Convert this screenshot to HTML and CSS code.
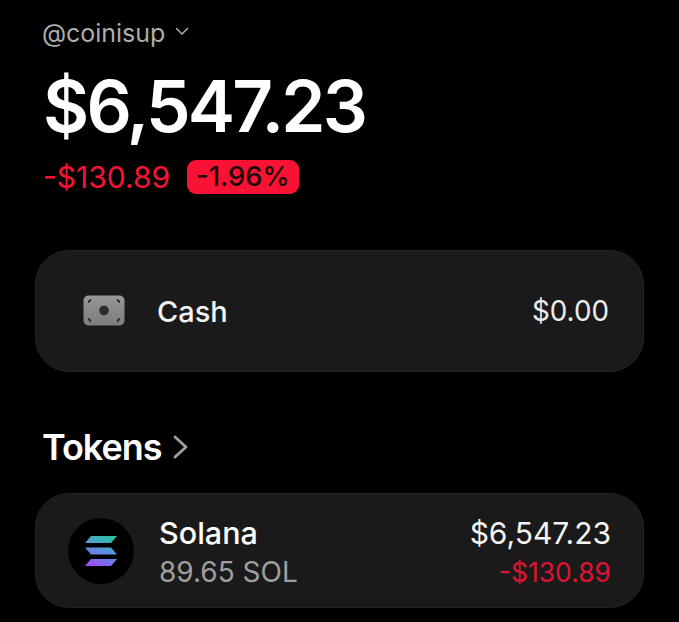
FILE: index.html
```html
<!DOCTYPE html>
<html lang="en">
<head>
<meta charset="utf-8">
<title>Wallet</title>
<link rel="stylesheet" href="styles.css">
</head>
<body>
<main class="page">
  <header class="account">
    <span class="handle">@coinisup</span>
    <svg class="caret" width="14" height="9" viewBox="0 0 14 9"><path d="M1.5 1.5 7 7l5.500-5.500" fill="none" stroke="#b0b0b0" stroke-width="1.500" stroke-linecap="round" stroke-linejoin="round"/></svg>
  </header>
  <h1 class="balance">$6,547.23</h1>
  <div class="change">
    <span class="change-value">-$130.89</span>
    <span class="change-badge">-1.96%</span>
  </div>
  <section class="card cash">
    <svg class="cash-icon" width="42" height="31" viewBox="0 0 42 31">
      <defs><linearGradient id="bill" x1="0" y1="0" x2="0" y2="1"><stop offset="0" stop-color="#98989a"/><stop offset="1" stop-color="#7c7c7e"/></linearGradient></defs>
      <rect x="0.5" y="0.5" width="41" height="30" rx="5" fill="url(#bill)"/>
      <circle cx="21" cy="15.500" r="4.800" fill="#2b2b2d"/>
      <path d="M5 6.500C5.500 5 6.500 4.300 8.500 4 8.300 6 7.300 7.500 5 8ZM37 6.500C36.500 5 35.500 4.300 33.500 4 33.700 6 34.700 7.500 37 8ZM5 24.500C5.500 26 6.500 26.700 8.500 27 8.300 25 7.300 23.500 5 23ZM37 24.500C36.500 26 35.500 26.700 33.500 27 33.700 25 34.700 23.500 37 23Z" fill="#2b2b2d"/>
    </svg>
    <span class="cash-label">Cash</span>
    <span class="cash-value">$0.00</span>
  </section>
  <h2 class="section-title">
    <span>Tokens</span>
    <svg class="chevron" width="15" height="24" viewBox="0 0 15 24"><path d="M2 2 13 12 2 22" fill="none" stroke="#a0a0a0" stroke-width="2.800" stroke-linecap="round" stroke-linejoin="round"/></svg>
  </h2>
  <section class="card token">
    <span class="token-logo">
      <svg width="34" height="30" viewBox="0 0 34 30">
        <defs><linearGradient id="sol" x1="0.7" y1="0" x2="0.3" y2="1"><stop offset="0" stop-color="#2fc0a2"/><stop offset="0.5" stop-color="#5a90e4"/><stop offset="1" stop-color="#9a4ffa"/></linearGradient></defs>
        <path fill="url(#sol)" d="M7 0H33L27 7H1ZM1 11.500H27L33 18.500H7ZM7 23H33L27 30H1Z"/>
      </svg>
    </span>
    <div class="token-name">
      <span class="token-title">Solana</span>
      <span class="token-amount">89.65 SOL</span>
    </div>
    <div class="token-values">
      <span class="token-total">$6,547.23</span>
      <span class="token-change">-$130.89</span>
    </div>
  </section>
</main>
</body>
</html>
```
FILE: styles.css
```css
* { box-sizing: border-box; }
html, body { margin: 0; height: 100%; }
body {
  background: #000;
  color: #fff;
  font-family: Inter, "Liberation Sans", sans-serif;
  overflow: hidden;
}
.page { padding: 16px 35px 0 35px; }
.account { display: flex; align-items: center; gap: 10px; padding-left: 7px; height: 34px; }
.handle { font-size: 25px; color: #adadad; letter-spacing: -0.05px; }
.caret { margin-top: -4px; }
.balance {
  margin: 16px 0 0;
  padding-left: 8px;
  font-size: 71px;
  line-height: 80px;
  font-weight: 600;
  letter-spacing: -2.8px;
}
.change { display: flex; align-items: center; gap: 17px; padding-left: 8px; height: 34px; margin-top: 14px; }
.change-value { font-size: 30px; color: #f81234; }
.change-badge {
  background: #f81234;
  color: #1a0508;
  border-radius: 9px;
  font-size: 27.3px;
  font-weight: 500;
  height: 34px;
  line-height: 34px;
  padding: 0 9px;
}
.card {
  width: 609px;
  background: #1a1a1a;
  border: 1px solid #232323;
  display: flex;
  align-items: center;
}
.cash { height: 122px; margin-top: 56px; border-radius: 34px; padding: 0 34px 0 47px; }
.cash-icon { flex: none; margin-top: -2px; }
.cash-label { font-size: 29px; font-weight: 500; margin-left: 32px; color: #f2f2f2; }
.cash-value { font-size: 27.800px; margin-left: auto; color: #ececec; }
.section-title {
  display: flex; align-items: center; gap: 11px;
  margin: 53px 0 0;
  padding-left: 7px;
  height: 44px;
  font-size: 36px;
  font-weight: 600;
  letter-spacing: -1px;
}
.token { height: 115px; margin-top: 24px; border-radius: 34px; padding: 0 32px 0 32px; }
.token-logo {
  flex: none;
  width: 66px; height: 66px;
  border-radius: 50%;
  background: #000;
  display: flex; align-items: center; justify-content: center;
}
.token-name, .token-values { display: flex; flex-direction: column; gap: 3px; padding-top: 4px; }
.token-name { margin-left: 25px; }
.token-values { margin-left: auto; align-items: flex-end; }
.token-title { font-size: 30.500px; font-weight: 500; line-height: 36px; }
.token-amount { font-size: 28px; color: #9f9f9f; line-height: 36px; }
.token-total { font-size: 30px; line-height: 36px; color: #f5f5f5; }
.token-change { font-size: 26.500px; line-height: 36px; color: #e01233; }
```
